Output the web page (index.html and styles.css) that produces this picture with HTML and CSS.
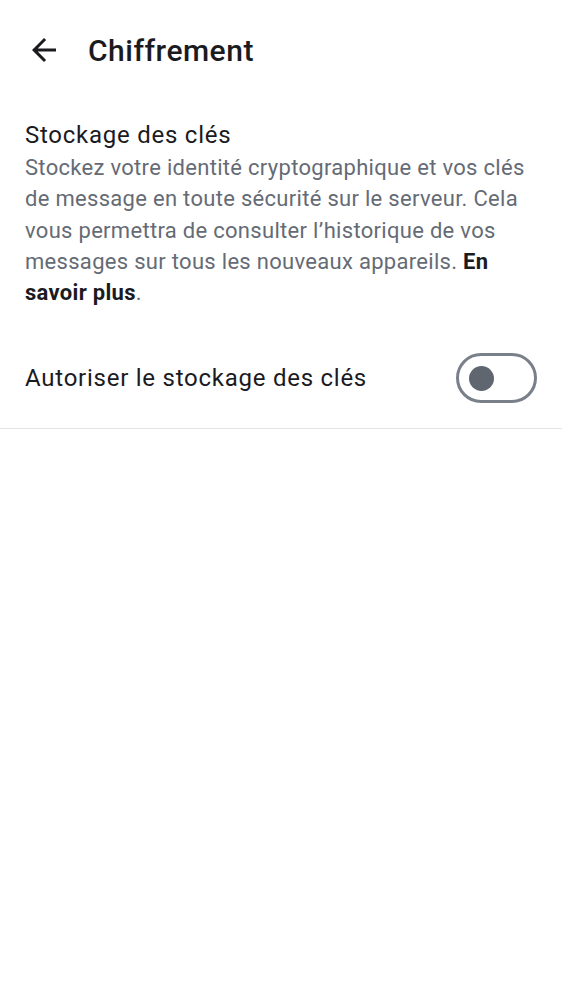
FILE: index.html
```html
<!DOCTYPE html>
<html lang="fr">
<head>
<meta charset="utf-8">
<link rel="stylesheet" href="styles.css">
</head>
<body>
<header class="topbar">
  <button class="back" aria-label="Retour">
    <svg width="36" height="36" viewBox="0 0 24 24"><path d="M20 11H7.83l5.59-5.59L12 4l-8 8 8 8 1.41-1.41L7.83 13H20v-2z" fill="#1b1b1f"/></svg>
  </button>
  <h1 class="title">Chiffrement</h1>
</header>
<section class="section">
  <h2 class="heading">Stockage des clés</h2>
  <p class="desc">Stockez votre identité cryptographique et vos clés de message en toute sécurité sur le serveur. Cela vous permettra de consulter l’historique de vos messages sur tous les nouveaux appareils. <b class="link">En savoir plus</b>.</p>
</section>
<div class="row">
  <span class="label">Autoriser le stockage des clés</span>
  <span class="switch"><span class="knob"></span></span>
</div>
<div class="divider"></div>
</body>
</html>
```
FILE: styles.css
```css
* { box-sizing: border-box; }
html, body { margin: 0; padding: 0; background: #ffffff; }
body { font-family: Roboto, "Noto Sans", sans-serif; color: #1b1b1f; width: 562px; }
.topbar { display: flex; align-items: center; height: 100px; padding-left: 26px; }
.back { border: 0; background: none; padding: 0; width: 36px; height: 36px; display: flex; }
.title { margin: 0 0 0 26px; font-size: 30px; font-weight: 500; letter-spacing: 0.5px; color: #1b1b1f; }
.section { padding: 18px 25px 0 25px; }
.heading { margin: 0; font-size: 24px; font-weight: 400; line-height: 34px; letter-spacing: 0.75px; color: #1b1b1f; }
.desc { margin: 0; font-size: 22px; line-height: 31.3px; letter-spacing: 0.3px; color: #656b75; }
.link { font-weight: 700; color: #1b1b1f; }
.row { display: flex; align-items: center; justify-content: space-between; padding: 45px 25px 25px 25px; }
.label { font-size: 24px; letter-spacing: 0.75px; color: #1b1b1f; }
.switch { width: 81px; height: 50px; border: 3px solid #79808a; border-radius: 25px; display: flex; align-items: center; padding-left: 10px; }
.knob { width: 25px; height: 25px; border-radius: 50%; background: #5f6670; }
.divider { height: 1px; background: #e4e4e8; }
```
